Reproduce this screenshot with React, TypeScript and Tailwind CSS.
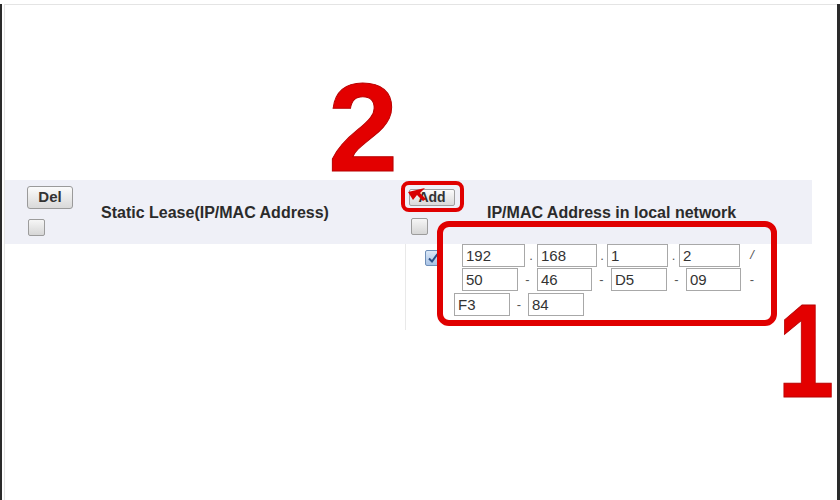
import React from "react";

function Box({ checked = false }: { checked?: boolean }) {
  return (
    <div
      className={
        checked
          ? "w-[16px] h-[16px] border border-[#6f8fb8] rounded-[2px] bg-linear-to-b from-[#dbe8f7] to-[#a9c3e6] flex items-center justify-center"
          : "w-[17px] h-[17px] border border-[#9c9c9c] rounded-[2px] bg-linear-to-b from-[#f6f6f6] to-[#d6d6d6]"
      }
    >
      {checked && (
        <svg width="12" height="12" viewBox="0 0 12 12">
          <path d="M2 6.5 L5 9.5 L10.5 2" fill="none" stroke="#2b4f86" strokeWidth="2" />
        </svg>
      )}
    </div>
  );
}

function Field({ w, v }: { w: string; v: string }) {
  return (
    <div
      className={`${w} h-[23px] border border-[#a8a8a8] bg-white pl-[3px] text-[15px] leading-[22px] text-[#333]`}
    >
      {v}
    </div>
  );
}

function Sep({ w, c, cls = "" }: { w: string; c: string; cls?: string }) {
  return <div className={`${w} h-[23px] flex items-center justify-center text-[13px] text-[#555] ${cls}`}>{c}</div>;
}

export default function App() {
  return (
    <div className="relative w-[840px] h-[500px] bg-white overflow-hidden font-['Liberation_Sans',Arial,sans-serif]">
      <div className="h-full box-border border-l-2 border-r-[3px] border-b-[3px] border-[#2a2a2a]">
        <div className="h-full ml-[2px] mt-[4px] border-t border-l border-[#e4e4e4] pt-[175px]">
          {/* header band */}
          <div className="flex h-[64px] bg-[#eff0f7] mr-[25px]">
            <div className="w-[400px] flex">
              <div className="ml-[22px] mt-[6px] flex flex-col gap-[10px]">
                <div className="w-[46px] h-[23px] border border-[#9a9a9a] rounded-[3px] bg-linear-to-b from-[#fbfbfb] to-[#d9d9d9] flex items-center justify-center text-[15px] font-bold text-[#333]">
                  Del
                </div>
                <div className="ml-[1px]">
                  <Box />
                </div>
              </div>
              <div className="ml-[28px] flex items-center pt-[2px] text-[16px] font-bold text-[#2b2b2b]">
                Static Lease(IP/MAC Address)
              </div>
            </div>
            <div className="flex-1 flex">
              <div className="ml-[4px] mt-[9px] flex flex-col gap-[12px]">
                <div className="w-[46px] h-[17px] border border-[#a0a0a0] rounded-[2px] bg-linear-to-b from-[#fbfbfb] to-[#dadada] flex items-center justify-center text-[14px] font-bold text-[#333]">
                  Add
                </div>
                <div className="ml-[2px]">
                  <Box />
                </div>
              </div>
              <div className="ml-[32px] flex items-center pt-[2px] text-[16px] font-bold text-[#2b2b2b]">
                IP/MAC Address in local network
              </div>
            </div>
          </div>
          {/* body row */}
          <div className="flex h-[86px] mr-[25px]">
            <div className="w-[400px]" />
            <div className="flex-1 border-l border-[#e9e9e9] flex">
              <div className="ml-[19px] mt-[6px]">
                <Box checked />
              </div>
              <div className="ml-[13px] flex flex-col gap-[1px]">
                <div className="flex ml-[8px]">
                  <Field w="w-[63px]" v="192" />
                  <Sep w="w-[12px]" c="." />
                  <Field w="w-[60px]" v="168" />
                  <Sep w="w-[10px]" c="." />
                  <Field w="w-[61px]" v="1" />
                  <Sep w="w-[11px]" c="." />
                  <Field w="w-[61px]" v="2" />
                  <Sep w="w-[24px]" c="/" cls="italic items-start pt-[1px]" />
                </div>
                <div className="flex ml-[8px]">
                  <Field w="w-[56px]" v="50" />
                  <Sep w="w-[19px]" c="-" />
                  <Field w="w-[55px]" v="46" />
                  <Sep w="w-[19px]" c="-" />
                  <Field w="w-[56px]" v="D5" />
                  <Sep w="w-[19px]" c="-" />
                  <Field w="w-[55px]" v="09" />
                  <Sep w="w-[22px]" c="-" />
                </div>
                <div className="flex mt-[1px]">
                  <Field w="w-[56px]" v="F3" />
                  <Sep w="w-[18px]" c="-" />
                  <Field w="w-[56px]" v="84" />
                </div>
              </div>
            </div>
          </div>
        </div>
      </div>

      {/* annotations */}
      <svg className="absolute left-[406px] top-[186px]" width="22" height="16" viewBox="0 0 22 16">
        <path d="M2 6 L19 2 L14 7 L20 13 L17 15 L11 9 L7 14 Z" fill="#d80000" />
      </svg>
      <div className="absolute left-[401px] top-[181px] w-[63px] h-[31px] border-[4px] border-[#e00000] rounded-[8px]" />
      <div className="absolute left-[437px] top-[221px] w-[340px] h-[105px] border-[6px] border-[#e00000] rounded-[12px]" />
      <div className="absolute left-[328px] top-[65px] text-[126px] leading-none font-bold text-[#e30000] [-webkit-text-stroke:1px_#b80000]">
        2
      </div>
      <div className="absolute left-[768px] top-[284px] text-[134px] leading-none font-bold text-[#e30000] [-webkit-text-stroke:1px_#b80000] scale-x-[0.76] origin-[40px_50%]">
        1
      </div>
    </div>
  );
}
